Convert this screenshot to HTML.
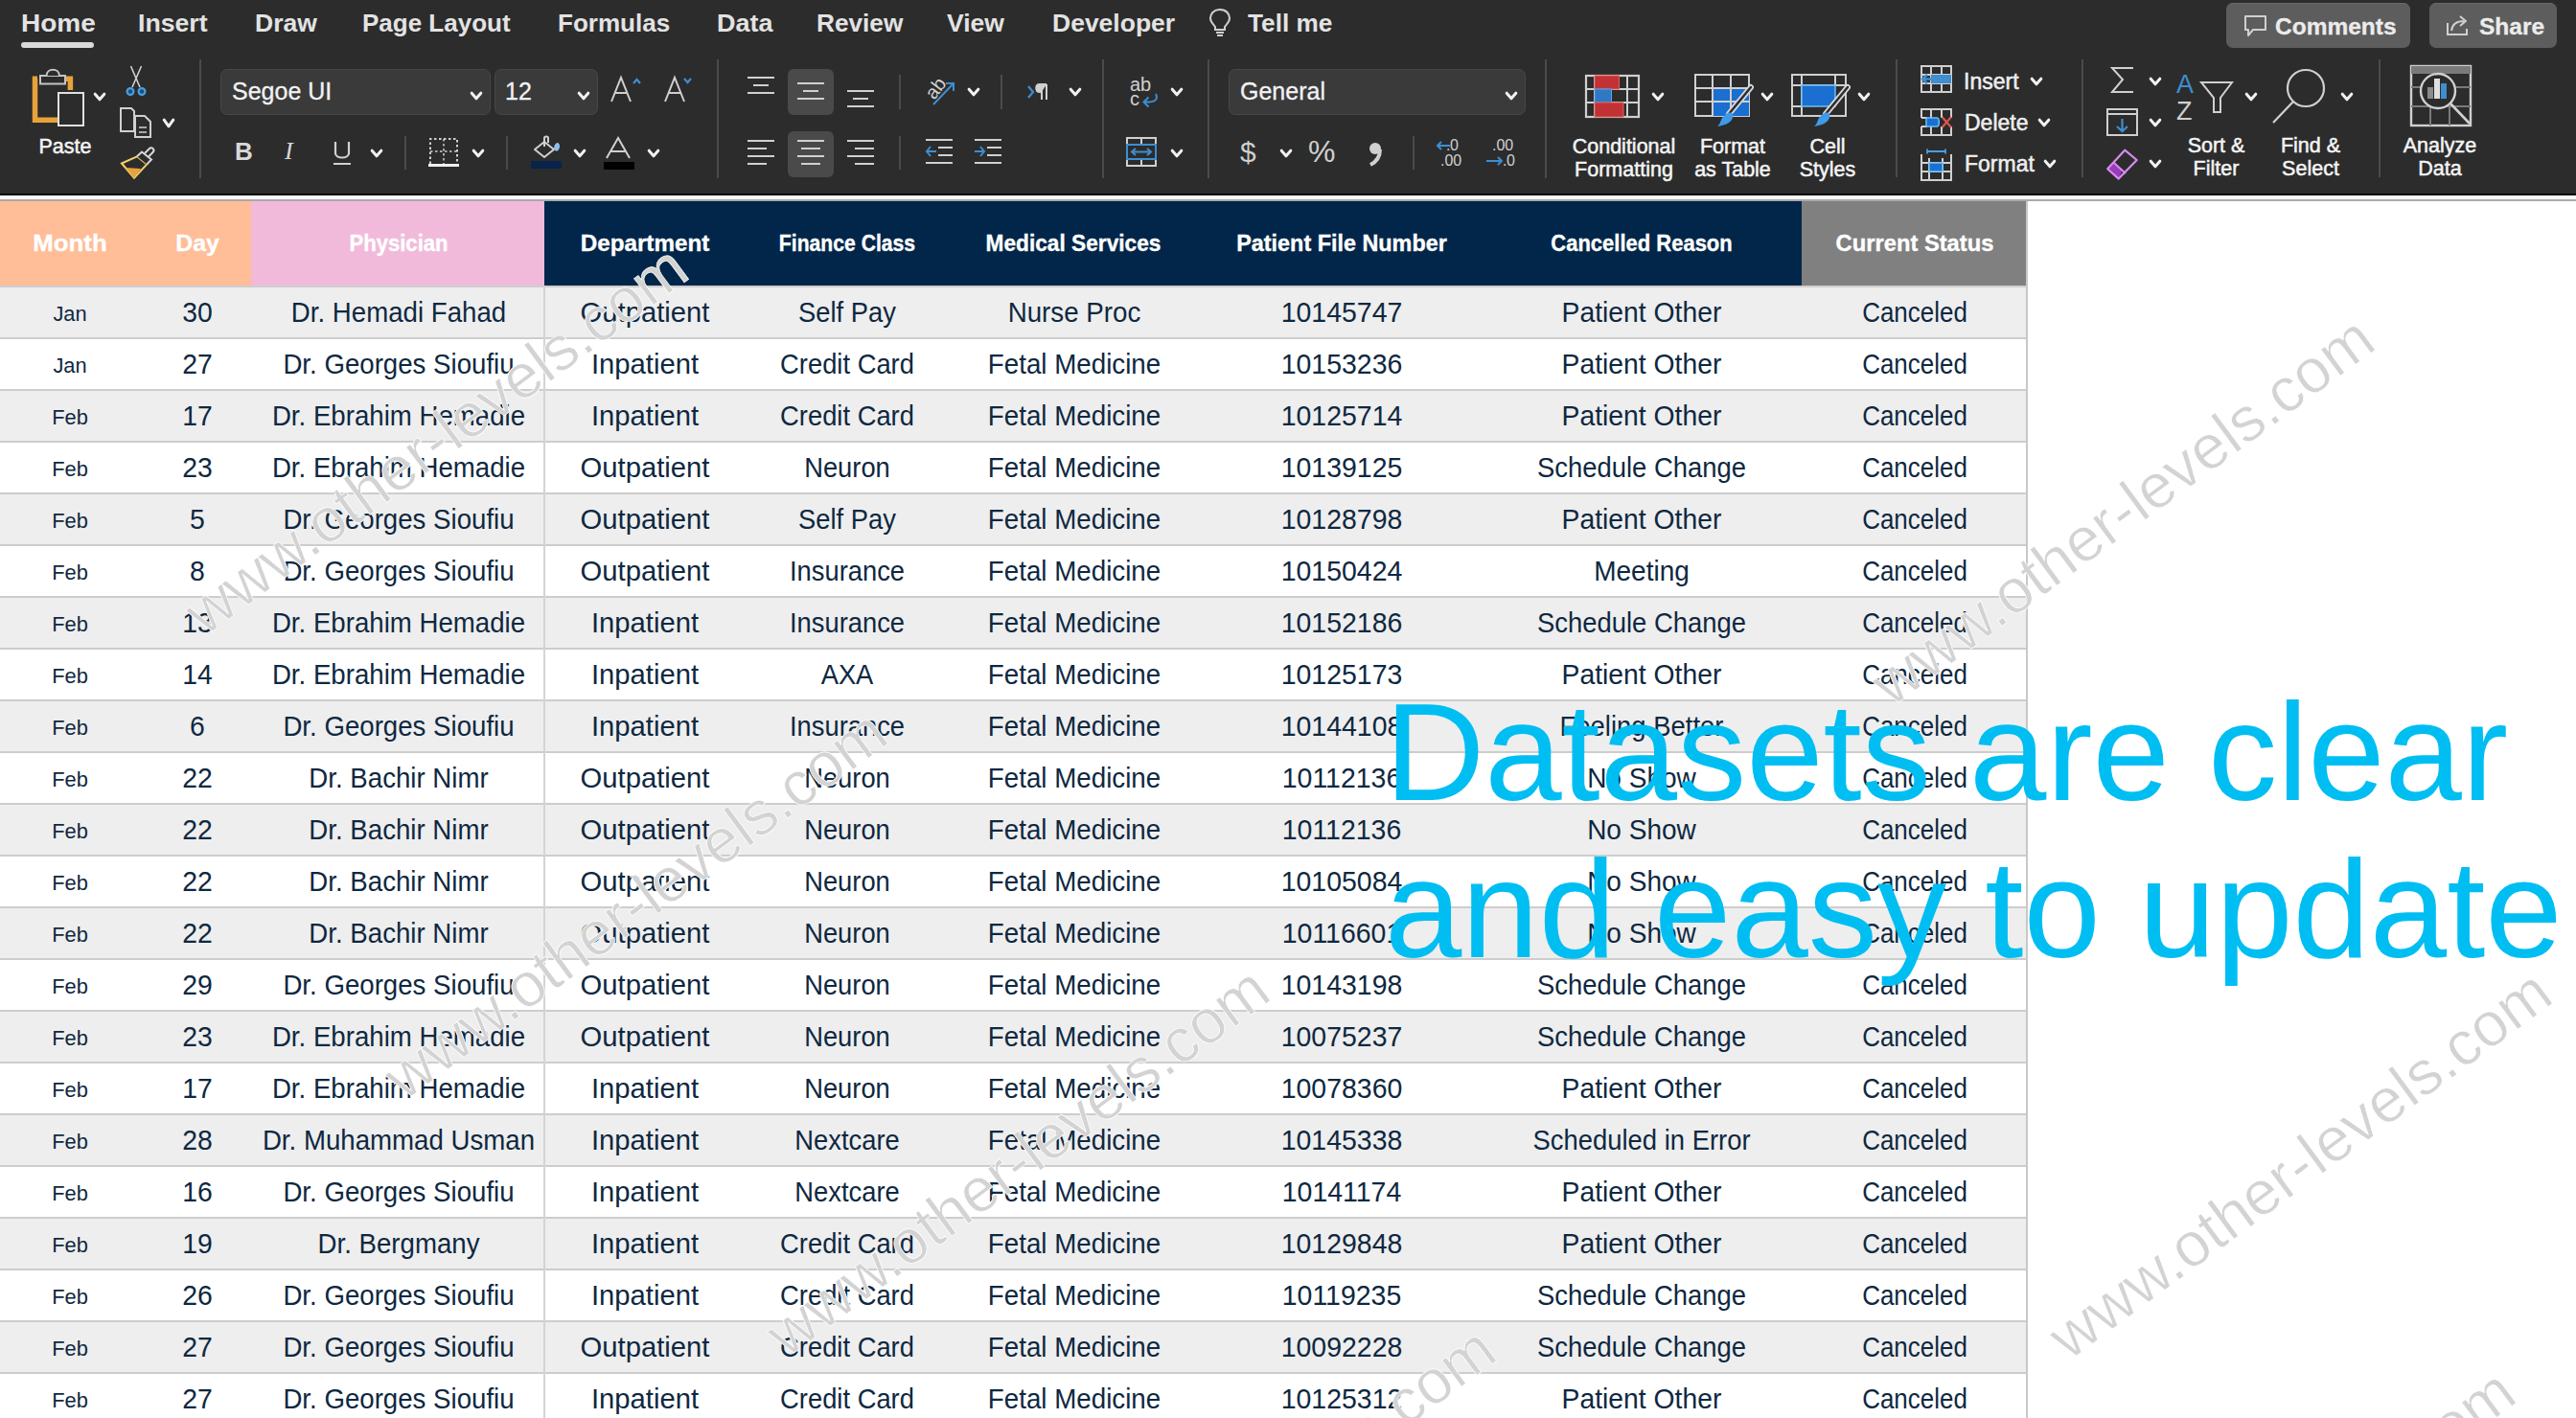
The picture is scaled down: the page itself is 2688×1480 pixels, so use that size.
<!DOCTYPE html><html><head><meta charset='utf-8'><style>
*{margin:0;padding:0;box-sizing:border-box}
html,body{width:2688px;height:1480px;overflow:hidden;background:#fff;font-family:"Liberation Sans", sans-serif}
.a{position:absolute}
.rib{position:absolute;left:0;top:0;width:2688px;height:202px;background:#2c2c2c}
.tab{position:absolute;top:9px;font-size:26.5px;font-weight:bold;color:#e3e3e3;white-space:nowrap;line-height:30px}
.lbl{position:absolute;font-size:21.5px;color:#f4f4f4;white-space:nowrap;text-align:center;line-height:24px;-webkit-text-stroke:0.5px #f4f4f4}
.sep{position:absolute;width:2px;background:#4b4b4b}
.cell{position:absolute;white-space:nowrap;text-align:center;color:#0e2841}
.hd{position:absolute;white-space:nowrap;text-align:center;color:#fff;font-weight:bold;-webkit-text-stroke:0.35px #fff}
.wm{position:absolute;white-space:nowrap;font-size:65px;color:#d3d3d3;line-height:1;-webkit-text-stroke:0.7px #fff}
svg{position:absolute;overflow:visible}
</style></head><body>
<div class='rib'></div>
<div class='a' style='left:0;top:202px;width:2688px;height:2px;background:#000'></div>
<div class='a' style='left:0;top:204px;width:2688px;height:4px;background:#f6f6f6'></div>
<div class='a' style='left:0;top:208px;width:2688px;height:2px;background:#a9a9a9'></div>
<div class='tab' style='left:22px;transform:scaleX(1.057);transform-origin:0 0'>Home</div>
<div class='tab' style='left:143.6px;transform:scaleX(1.006);transform-origin:0 0'>Insert</div>
<div class='tab' style='left:266px;transform:scaleX(1.000);transform-origin:0 0'>Draw</div>
<div class='tab' style='left:378px;transform:scaleX(0.981);transform-origin:0 0'>Page Layout</div>
<div class='tab' style='left:582px;transform:scaleX(0.983);transform-origin:0 0'>Formulas</div>
<div class='tab' style='left:747.5px;transform:scaleX(1.018);transform-origin:0 0'>Data</div>
<div class='tab' style='left:852px;transform:scaleX(0.989);transform-origin:0 0'>Review</div>
<div class='tab' style='left:988px;transform:scaleX(1.000);transform-origin:0 0'>View</div>
<div class='tab' style='left:1098px;transform:scaleX(1.000);transform-origin:0 0'>Developer</div>
<div class='tab' style='left:1302px;transform:scaleX(0.989);transform-origin:0 0'>Tell me</div>
<div class='a' style='left:22px;top:44px;width:76px;height:6px;border-radius:3px;background:#d9d9d9'></div>
<svg style='left:1261px;top:8px' width='24' height='30' viewBox='0 0 24 30'><path d='M12 2 C5 2 2 7 2 11 C2 15 5 17 7 20 L7 23 L17 23 L17 20 C19 17 22 15 22 11 C22 7 19 2 12 2 Z' fill='none' stroke='#d0d0d0' stroke-width='2'/><path d='M8 26 L16 26 M9 29 L15 29' stroke='#d0d0d0' stroke-width='2'/></svg>
<div class='a' style='left:2323px;top:3px;width:192px;height:47px;border-radius:7px;background:#5d5d5d;border-top:1px solid #6a6a6a'></div>
<div class='a' style='left:2535px;top:3px;width:133px;height:47px;border-radius:7px;background:#5d5d5d;border-top:1px solid #6a6a6a'></div>
<svg style='left:2341px;top:15px' width='25' height='25' viewBox='0 0 25 25'><path d='M2 2 H23 V16 H10 L5 22 L5 16 H2 Z' fill='none' stroke='#d0d0d0' stroke-width='2' stroke-linejoin='round'/></svg>
<div class='a' style='left:2374px;top:13px;font-size:24.5px;font-weight:bold;color:#ececec;line-height:30px;-webkit-text-stroke:0.3px #ececec'>Comments</div>
<svg style='left:2552px;top:14px' width='25' height='24' viewBox='0 0 25 24'><path d='M2 10 V22 H22 V16' fill='none' stroke='#d0d0d0' stroke-width='2'/><path d='M6 18 C7 11 12 8 19 8 M15 3 L21 8 L15 13' fill='none' stroke='#d0d0d0' stroke-width='2' stroke-linejoin='round'/></svg>
<div class='a' style='left:2587px;top:13px;font-size:24.5px;font-weight:bold;color:#ececec;line-height:30px;-webkit-text-stroke:0.3px #ececec'>Share</div>
<svg style='left:30px;top:68px' width='62' height='68' viewBox='0 0 62 68'><path d='M9 14.25 H6.5 V57.25 H32' fill='none' stroke='#e8a23a' stroke-width='5.5'/><path d='M37 14.25 H43.4 V26' fill='none' stroke='#e8a23a' stroke-width='5.5'/><path d='M12 19.6 V11 H38 V19.6 Z' fill='#2c2c2c' stroke='#c4c4c4' stroke-width='2'/><path d='M18.6 11 C18.6 2.5 31.9 2.5 31.9 11' fill='#2c2c2c' stroke='#c4c4c4' stroke-width='2'/><rect x='31' y='29' width='26' height='34' fill='#2c2c2c' stroke='#e0e0e0' stroke-width='2'/></svg>
<svg style='left:98px;top:96.5px' width='12' height='8' viewBox='0 0 12 8'><path d='M1.2 1.2 L6.0 6.8 L10.8 1.2' fill='none' stroke='#f2f2f2' stroke-width='3' stroke-linecap='round' stroke-linejoin='round'/></svg>
<div class='lbl' style='left:-32px;top:141px;width:200px;font-size:21.5px'>Paste</div>
<svg style='left:131px;top:68px' width='22' height='33' viewBox='0 0 22 33'><path d='M5.5 1 L15 23 M16.5 1 L7 23' stroke='#d0d0d0' stroke-width='1.6'/><circle cx='5' cy='27.5' r='3.4' fill='#1c4e7c' stroke='#4a9ee0' stroke-width='2.2'/><circle cx='17' cy='27.5' r='3.4' fill='#1c4e7c' stroke='#4a9ee0' stroke-width='2.2'/></svg>
<svg style='left:125px;top:112px' width='34' height='33' viewBox='0 0 34 33'><path d='M1 1 H12 L15 4 V25 H1 Z' fill='#2c2c2c' stroke='#d0d0d0' stroke-width='2'/><path d='M16 9 H26 L32 15 V31 H16 Z' fill='#2c2c2c' stroke='#d0d0d0' stroke-width='2'/><path d='M20 21 H28 M20 26 H28' stroke='#d0d0d0' stroke-width='1.5'/></svg>
<svg style='left:170px;top:124px' width='12' height='9' viewBox='0 0 12 9'><path d='M1.2 1.2 L6.0 7.8 L10.8 1.2' fill='none' stroke='#f2f2f2' stroke-width='3' stroke-linecap='round' stroke-linejoin='round'/></svg>
<svg style='left:120px;top:150px' width='42' height='42' viewBox='0 0 42 42'><path d='M7 20.5 L23 13.3 L33.3 21.4 L20 35.7 Z' fill='#2c2c2c' stroke='#f0cf6a' stroke-width='2'/><path d='M11 25 L27 26 L20 35.7 Z' fill='#e8a23a'/><path d='M23 13.3 L28 8.5 L38 16.5 L33.3 21.4' fill='#2c2c2c' stroke='#d8d8d8' stroke-width='2'/><path d='M31 10 L36 5 C37 4 39 4 40 5.5 C41 7 40.5 8 39.5 9 L35 13.5' fill='none' stroke='#d8d8d8' stroke-width='2'/></svg>
<div class='sep' style='left:208px;top:62px;height:124px'></div>
<div class='a' style='left:229.5px;top:72px;width:282px;height:48px;border-radius:7px;background:#3a3a3a;border:1.5px solid #474747'></div>
<div class='a' style='left:242px;top:80px;font-size:25px;color:#f2f2f2;line-height:30px;-webkit-text-stroke:0.3px #f2f2f2'>Segoe UI</div>
<svg style='left:490.5px;top:96px' width='12' height='8' viewBox='0 0 12 8'><path d='M1.2 1.2 L6.0 6.8 L10.8 1.2' fill='none' stroke='#f2f2f2' stroke-width='3' stroke-linecap='round' stroke-linejoin='round'/></svg>
<div class='a' style='left:516px;top:72px;width:108px;height:48px;border-radius:7px;background:#3a3a3a;border:1.5px solid #474747'></div>
<div class='a' style='left:527px;top:80px;font-size:25px;color:#f2f2f2;line-height:30px;-webkit-text-stroke:0.3px #f2f2f2'>12</div>
<svg style='left:602.7px;top:96px' width='12' height='8' viewBox='0 0 12 8'><path d='M1.2 1.2 L6.0 6.8 L10.8 1.2' fill='none' stroke='#f2f2f2' stroke-width='3' stroke-linecap='round' stroke-linejoin='round'/></svg>
<svg style='left:636px;top:78px' width='34' height='30' viewBox='0 0 34 30'><path d='M2 28 L12 3 L22 28 M6 19 H18' fill='none' stroke='#d0d0d0' stroke-width='2'/><path d='M25 9 L28.5 5 L32 9' fill='none' stroke='#3e8ed0' stroke-width='2.2'/></svg>
<svg style='left:692px;top:78px' width='32' height='30' viewBox='0 0 32 30'><path d='M2 28 L12 3 L22 28 M6 19 H18' fill='none' stroke='#d0d0d0' stroke-width='2'/><path d='M22 4 L25.5 8 L29 4' fill='none' stroke='#3e8ed0' stroke-width='2.2'/></svg>
<div class='a' style='left:245px;top:143px;font-size:26px;font-weight:bold;color:#d8d8d8;line-height:30px'>B</div>
<div class='a' style='left:297px;top:143px;font-size:26px;font-style:italic;color:#d8d8d8;line-height:30px;font-family:"Liberation Serif"'>I</div>
<svg style='left:347px;top:146px' width='20' height='28' viewBox='0 0 20 28'><path d='M3 2 V14 C3 20 17 20 17 14 V2' fill='none' stroke='#d0d0d0' stroke-width='2.2'/><path d='M1 25 H19' stroke='#d0d0d0' stroke-width='2'/></svg>
<svg style='left:387px;top:156px' width='12' height='8' viewBox='0 0 12 8'><path d='M1.2 1.2 L6.0 6.8 L10.8 1.2' fill='none' stroke='#f2f2f2' stroke-width='3' stroke-linecap='round' stroke-linejoin='round'/></svg>
<div class='sep' style='left:422px;top:142px;height:35px'></div>
<svg style='left:447px;top:143px' width='32' height='32' viewBox='0 0 32 32'><path d='M2 28 V2 H30 V28' fill='none' stroke='#d0d0d0' stroke-width='2' stroke-dasharray='2.5 2.5'/><path d='M16 2 V28 M2 15 H30' stroke='#d0d0d0' stroke-width='1.5' stroke-dasharray='2.5 2.5'/><path d='M0 29.5 H32' stroke='#f0f0f0' stroke-width='3'/></svg>
<svg style='left:493px;top:156px' width='12' height='8' viewBox='0 0 12 8'><path d='M1.2 1.2 L6.0 6.8 L10.8 1.2' fill='none' stroke='#f2f2f2' stroke-width='3' stroke-linecap='round' stroke-linejoin='round'/></svg>
<div class='sep' style='left:528px;top:142px;height:35px'></div>
<svg style='left:553px;top:141px' width='34' height='36' viewBox='0 0 34 36'><path d='M5 15 L15 7 L25 15 L15 23 Z' fill='none' stroke='#d0d0d0' stroke-width='2' stroke-linejoin='round'/><path d='M15 12 V3 C15 1 19 1 19 3 V8' fill='none' stroke='#d0d0d0' stroke-width='2'/><path d='M25 15 C25 10 27 8 29 8 C31 9 32 12 30 15 C29 17 27 17 25 15 Z' fill='#8ec0ea'/><rect x='1' y='27' width='32' height='8' fill='#08244a'/></svg>
<svg style='left:599px;top:156px' width='12' height='8' viewBox='0 0 12 8'><path d='M1.2 1.2 L6.0 6.8 L10.8 1.2' fill='none' stroke='#f2f2f2' stroke-width='3' stroke-linecap='round' stroke-linejoin='round'/></svg>
<svg style='left:629px;top:143px' width='34' height='34' viewBox='0 0 34 34'><path d='M4 22 L16 1 L28 22 M8 15 H24' fill='none' stroke='#d0d0d0' stroke-width='2'/><rect x='1' y='26' width='32' height='8' fill='#000'/></svg>
<svg style='left:676px;top:156px' width='12' height='8' viewBox='0 0 12 8'><path d='M1.2 1.2 L6.0 6.8 L10.8 1.2' fill='none' stroke='#f2f2f2' stroke-width='3' stroke-linecap='round' stroke-linejoin='round'/></svg>
<div class='sep' style='left:748px;top:62px;height:124px'></div>
<div class='a' style='left:822px;top:72px;width:48px;height:48px;border-radius:6px;background:#4a4a4a'></div>
<div class='a' style='left:822px;top:136.5px;width:48px;height:48px;border-radius:6px;background:#4a4a4a'></div>
<svg style='left:780px;top:79px' width='28' height='30' viewBox='0 0 28 30'><path d='M0 2 H28' stroke='#d0d0d0' stroke-width='2'/><path d='M6 10 H22' stroke='#d0d0d0' stroke-width='2'/><path d='M0 18 H28' stroke='#d0d0d0' stroke-width='2'/></svg>
<svg style='left:832px;top:85px' width='28' height='30' viewBox='0 0 28 30'><path d='M0 2 H28' stroke='#d0d0d0' stroke-width='2'/><path d='M6 10 H22' stroke='#d0d0d0' stroke-width='2'/><path d='M0 18 H28' stroke='#d0d0d0' stroke-width='2'/></svg>
<svg style='left:884px;top:93px' width='28' height='30' viewBox='0 0 28 30'><path d='M0 2 H28' stroke='#d0d0d0' stroke-width='2'/><path d='M6 10 H22' stroke='#d0d0d0' stroke-width='2'/><path d='M0 18 H28' stroke='#d0d0d0' stroke-width='2'/></svg>
<svg style='left:780px;top:146px' width='28' height='30' viewBox='0 0 28 30'><path d='M0 1 H28' stroke='#d0d0d0' stroke-width='2'/><path d='M0 9 H20' stroke='#d0d0d0' stroke-width='2'/><path d='M0 17 H28' stroke='#d0d0d0' stroke-width='2'/><path d='M0 25 H20' stroke='#d0d0d0' stroke-width='2'/></svg>
<svg style='left:832px;top:146px' width='28' height='30' viewBox='0 0 28 30'><path d='M0 1 H28' stroke='#d0d0d0' stroke-width='2'/><path d='M4 9 H24' stroke='#d0d0d0' stroke-width='2'/><path d='M0 17 H28' stroke='#d0d0d0' stroke-width='2'/><path d='M4 25 H24' stroke='#d0d0d0' stroke-width='2'/></svg>
<svg style='left:884px;top:146px' width='28' height='30' viewBox='0 0 28 30'><path d='M0 1 H28' stroke='#d0d0d0' stroke-width='2'/><path d='M8 9 H28' stroke='#d0d0d0' stroke-width='2'/><path d='M0 17 H28' stroke='#d0d0d0' stroke-width='2'/><path d='M8 25 H28' stroke='#d0d0d0' stroke-width='2'/></svg>
<div class='sep' style='left:938px;top:78px;height:36px'></div>
<div class='sep' style='left:938px;top:142px;height:35px'></div>
<svg style='left:962px;top:79px' width='36' height='32' viewBox='0 0 36 32'><text x='3' y='22' font-size='20' fill='#d0d0d0' transform='rotate(-52 12 14)' font-family='Liberation Sans'>ab</text><path d='M12 30 L33 8 M25 8 H33 V16' fill='none' stroke='#3e8ed0' stroke-width='2'/></svg>
<svg style='left:1009.6px;top:92px' width='12' height='8' viewBox='0 0 12 8'><path d='M1.2 1.2 L6.0 6.8 L10.8 1.2' fill='none' stroke='#f2f2f2' stroke-width='3' stroke-linecap='round' stroke-linejoin='round'/></svg>
<div class='sep' style='left:1044px;top:78px;height:36px'></div>
<svg style='left:1072px;top:86px' width='28' height='20' viewBox='0 0 28 20'><path d='M1 4 L6 10 L1 16' fill='none' stroke='#3e8ed0' stroke-width='2.2'/><path d='M15 18 V2 M20 18 V2 M20 2 H13 C8 2 8 10 13 10 H15' fill='#d0d0d0' stroke='#d0d0d0' stroke-width='2'/></svg>
<svg style='left:1115.6px;top:92px' width='12' height='8' viewBox='0 0 12 8'><path d='M1.2 1.2 L6.0 6.8 L10.8 1.2' fill='none' stroke='#f2f2f2' stroke-width='3' stroke-linecap='round' stroke-linejoin='round'/></svg>
<svg style='left:966px;top:145px' width='30' height='28' viewBox='0 0 30 28'><path d='M0 1 H28 M13 9 H28 M13 17 H28 M0 25 H28' stroke='#d0d0d0' stroke-width='2'/><path d='M1 13 H11 M5 8 L1 13 L5 18' fill='none' stroke='#3e8ed0' stroke-width='2'/></svg>
<svg style='left:1017px;top:145px' width='30' height='28' viewBox='0 0 30 28'><path d='M0 1 H28 M13 9 H28 M13 17 H28 M0 25 H28' stroke='#d0d0d0' stroke-width='2'/><path d='M0 13 H10 M6 8 L10 13 L6 18' fill='none' stroke='#3e8ed0' stroke-width='2'/></svg>
<div class='sep' style='left:1150px;top:62px;height:124px'></div>
<svg style='left:1179px;top:79px' width='34' height='34' viewBox='0 0 34 34'><text x='0' y='16' font-size='20' fill='#d0d0d0' font-family='Liberation Sans'>ab</text><text x='0' y='31' font-size='20' fill='#d0d0d0' font-family='Liberation Sans'>c</text><path d='M27 19 C30 25 26 28 15 27.5 M19.5 22.5 L14.5 27.5 L19.5 32.5' fill='none' stroke='#3e8ed0' stroke-width='2'/></svg>
<svg style='left:1221.6px;top:92px' width='12' height='8' viewBox='0 0 12 8'><path d='M1.2 1.2 L6.0 6.8 L10.8 1.2' fill='none' stroke='#f2f2f2' stroke-width='3' stroke-linecap='round' stroke-linejoin='round'/></svg>
<svg style='left:1175px;top:143px' width='33' height='32' viewBox='0 0 33 32'><rect x='1' y='1' width='30' height='29' fill='none' stroke='#d0d0d0' stroke-width='2'/><path d='M1 8 H31 M1 23 H31 M16 1 V8 M16 23 V30' stroke='#d0d0d0' stroke-width='2'/><rect x='1' y='8' width='30' height='15' fill='none' stroke='#3e8ed0' stroke-width='2'/><path d='M6 15.5 H26 M10 12 L6 15.5 L10 19 M22 12 L26 15.5 L22 19' fill='none' stroke='#3e8ed0' stroke-width='2'/></svg>
<svg style='left:1221.6px;top:156px' width='12' height='8' viewBox='0 0 12 8'><path d='M1.2 1.2 L6.0 6.8 L10.8 1.2' fill='none' stroke='#f2f2f2' stroke-width='3' stroke-linecap='round' stroke-linejoin='round'/></svg>
<div class='sep' style='left:1260px;top:62px;height:124px'></div>
<div class='a' style='left:1282px;top:72px;width:310px;height:48px;border-radius:7px;background:#3a3a3a;border:1.5px solid #474747'></div>
<div class='a' style='left:1294px;top:80px;font-size:25px;color:#f2f2f2;line-height:30px;-webkit-text-stroke:0.3px #f2f2f2'>General</div>
<svg style='left:1570.6px;top:96px' width='12' height='8' viewBox='0 0 12 8'><path d='M1.2 1.2 L6.0 6.8 L10.8 1.2' fill='none' stroke='#f2f2f2' stroke-width='3' stroke-linecap='round' stroke-linejoin='round'/></svg>
<div class='a' style='left:1294px;top:142px;font-size:30px;color:#d0d0d0;line-height:34px'>$</div>
<svg style='left:1335.5px;top:156px' width='12' height='8' viewBox='0 0 12 8'><path d='M1.2 1.2 L6.0 6.8 L10.8 1.2' fill='none' stroke='#f2f2f2' stroke-width='3' stroke-linecap='round' stroke-linejoin='round'/></svg>
<div class='a' style='left:1365px;top:141px;font-size:32px;color:#d0d0d0;line-height:34px'>%</div>
<svg style='left:1427px;top:146px' width='16' height='28' viewBox='0 0 16 28'><circle cx='8' cy='9' r='6' fill='#d0d0d0'/><path d='M13 10 C13 18 9 23 3 26' fill='none' stroke='#d0d0d0' stroke-width='4'/></svg>
<div class='sep' style='left:1474px;top:142px;height:35px'></div>
<svg style='left:1498px;top:143px' width='34' height='32' viewBox='0 0 34 32'><text x='15' y='14' font-size='16' fill='#d0d0d0' font-family='Liberation Sans'>0</text><text x='5' y='30' font-size='16' fill='#d0d0d0' font-family='Liberation Sans'>.00</text><text x='11' y='14' font-size='16' fill='#d0d0d0' font-family='Liberation Sans'>.</text><path d='M2 9 H15 M6 5 L2 9 L6 13' fill='none' stroke='#3e8ed0' stroke-width='2'/></svg>
<svg style='left:1550px;top:143px' width='34' height='32' viewBox='0 0 34 32'><text x='7' y='14' font-size='16' fill='#d0d0d0' font-family='Liberation Sans'>.00</text><text x='22' y='30' font-size='16' fill='#d0d0d0' font-family='Liberation Sans'>0</text><text x='18' y='30' font-size='16' fill='#d0d0d0' font-family='Liberation Sans'>.</text><path d='M1 25 H17 M13 21 L17 25 L13 29' fill='none' stroke='#3e8ed0' stroke-width='2'/></svg>
<div class='sep' style='left:1612px;top:62px;height:124px'></div>
<svg style='left:1653px;top:77px' width='58' height='46' viewBox='0 0 58 46'><rect x='2' y='2' width='55' height='43' fill='none' stroke='#d0d0d0' stroke-width='2.2'/><path d='M11 2 V45 M45 2 V45 M2 16 H57 M2 30 H57' stroke='#d0d0d0' stroke-width='2'/><rect x='11' y='2' width='25.5' height='14' fill='#c23234' stroke='#e06060' stroke-width='1'/><rect x='11' y='16' width='17.5' height='14' fill='#2f78c4' stroke='#5aa8e8' stroke-width='1'/><rect x='11' y='30' width='30' height='15' fill='#c23234' stroke='#e06060' stroke-width='1'/></svg>
<svg style='left:1724px;top:97px' width='12' height='8' viewBox='0 0 12 8'><path d='M1.2 1.2 L6.0 6.8 L10.8 1.2' fill='none' stroke='#f2f2f2' stroke-width='3' stroke-linecap='round' stroke-linejoin='round'/></svg>
<div class='lbl' style='left:1594.5px;top:140.5px;width:200px;font-size:21.5px'>Conditional</div>
<div class='lbl' style='left:1594.5px;top:164.5px;width:200px;font-size:21.5px'>Formatting</div>
<svg style='left:1768px;top:77px' width='62' height='56' viewBox='0 0 62 56'><rect x='1' y='1' width='56' height='43' fill='none' stroke='#d0d0d0' stroke-width='2'/><rect x='19' y='15' width='38' height='29' fill='#1a6fd0'/><path d='M19 1 V44 M38 1 V44 M1 15 H57 M1 29 H57' stroke='#d0d0d0' stroke-width='2'/><path d='M59 14 L36 42' stroke='#d8d8d8' stroke-width='6' stroke-linecap='round'/><path d='M59 14 L36 42' stroke='#2c2c2c' stroke-width='2.5' stroke-linecap='round'/><path d='M31 44 C36 38 42 40 40 46 C38 52 30 54 24 55 C28 52 27 47 31 44 Z' fill='#3f9ae8'/></svg>
<svg style='left:1838px;top:97px' width='12' height='8' viewBox='0 0 12 8'><path d='M1.2 1.2 L6.0 6.8 L10.8 1.2' fill='none' stroke='#f2f2f2' stroke-width='3' stroke-linecap='round' stroke-linejoin='round'/></svg>
<div class='lbl' style='left:1708px;top:140.5px;width:200px;font-size:21.5px'>Format</div>
<div class='lbl' style='left:1708px;top:164.5px;width:200px;font-size:21.5px'>as Table</div>
<svg style='left:1869px;top:77px' width='62' height='56' viewBox='0 0 62 56'><rect x='1' y='1' width='56' height='43' fill='none' stroke='#d0d0d0' stroke-width='2'/><path d='M11 1 V44 M46 1 V12 M1 12 H57 M1 34 H11' stroke='#d0d0d0' stroke-width='2'/><rect x='11' y='12' width='35' height='22' fill='#1a6fd0' stroke='#6cc0f8' stroke-width='1.5'/><path d='M59 14 L36 42' stroke='#d8d8d8' stroke-width='6' stroke-linecap='round'/><path d='M59 14 L36 42' stroke='#2c2c2c' stroke-width='2.5' stroke-linecap='round'/><path d='M31 44 C36 38 42 40 40 46 C38 52 30 54 24 55 C28 52 27 47 31 44 Z' fill='#3f9ae8'/></svg>
<svg style='left:1938.5px;top:97px' width='12' height='8' viewBox='0 0 12 8'><path d='M1.2 1.2 L6.0 6.8 L10.8 1.2' fill='none' stroke='#f2f2f2' stroke-width='3' stroke-linecap='round' stroke-linejoin='round'/></svg>
<div class='lbl' style='left:1807px;top:140.5px;width:200px;font-size:21.5px'>Cell</div>
<div class='lbl' style='left:1807px;top:164.5px;width:200px;font-size:21.5px'>Styles</div>
<div class='sep' style='left:1978px;top:62px;height:123px'></div>
<svg style='left:2004px;top:68px' width='34' height='30' viewBox='0 0 34 30'><rect x='1' y='1' width='31' height='27' fill='none' stroke='#d0d0d0' stroke-width='2'/><path d='M11 1 V28 M22 1 V28 M1 10 H32 M1 19 H32' stroke='#d0d0d0' stroke-width='2'/><rect x='11' y='10' width='21' height='9' fill='#3e8ed0'/><path d='M2 14.5 H14 M7 10 L2 14.5 L7 19' fill='none' stroke='#3e8ed0' stroke-width='2.4'/></svg>
<div class='a' style='left:2049px;top:72px;font-size:23px;color:#ececec;line-height:26px;-webkit-text-stroke:0.5px #f4f4f4'>Insert</div>
<svg style='left:2119px;top:81px' width='12' height='8' viewBox='0 0 12 8'><path d='M1.2 1.2 L6.0 6.8 L10.8 1.2' fill='none' stroke='#f2f2f2' stroke-width='3' stroke-linecap='round' stroke-linejoin='round'/></svg>
<svg style='left:2004px;top:113px' width='34' height='30' viewBox='0 0 34 30'><path d='M1 10 V1 H32 V10 M1 19 V28 H32 V19 M11 1 V10 M22 1 V10 M11 19 V28 M22 19 V28 M1 10 H7 M1 19 H7' fill='none' stroke='#d0d0d0' stroke-width='2'/><path d='M6 10 H17 C20 10 20 19 17 19 H6 Z' fill='#1a6fd0' stroke='#6cc0f8' stroke-width='1.5'/><path d='M22.5 9 L32 20 M32 9 L22.5 20' stroke='#e05555' stroke-width='2.2'/></svg>
<div class='a' style='left:2050px;top:115px;font-size:23px;color:#ececec;line-height:26px;-webkit-text-stroke:0.5px #f4f4f4'>Delete</div>
<svg style='left:2127px;top:124px' width='12' height='8' viewBox='0 0 12 8'><path d='M1.2 1.2 L6.0 6.8 L10.8 1.2' fill='none' stroke='#f2f2f2' stroke-width='3' stroke-linecap='round' stroke-linejoin='round'/></svg>
<svg style='left:2004px;top:155px' width='34' height='34' viewBox='0 0 34 34'><path d='M1 6 V33 H32 V6' fill='none' stroke='#d0d0d0' stroke-width='2'/><path d='M9 10 V33 M23 10 V33 M1 15 H32 M1 24 H32' stroke='#d0d0d0' stroke-width='2'/><rect x='9' y='15' width='14' height='9' fill='#1a6fd0' stroke='#6cc0f8' stroke-width='1.5'/><path d='M7 3 H26 M7 0.5 V5.5 M26 0.5 V5.5' stroke='#4a9ee0' stroke-width='1.8'/></svg>
<div class='a' style='left:2050px;top:158px;font-size:23px;color:#ececec;line-height:26px;-webkit-text-stroke:0.5px #f4f4f4'>Format</div>
<svg style='left:2133px;top:167px' width='12' height='8' viewBox='0 0 12 8'><path d='M1.2 1.2 L6.0 6.8 L10.8 1.2' fill='none' stroke='#f2f2f2' stroke-width='3' stroke-linecap='round' stroke-linejoin='round'/></svg>
<div class='sep' style='left:2171.5px;top:62px;height:123px'></div>
<svg style='left:2202px;top:69px' width='26' height='30' viewBox='0 0 26 30'><path d='M24 2 H2 L13 14 L2 27 H24' fill='none' stroke='#d0d0d0' stroke-width='2'/></svg>
<svg style='left:2242.6px;top:81px' width='12' height='8' viewBox='0 0 12 8'><path d='M1.2 1.2 L6.0 6.8 L10.8 1.2' fill='none' stroke='#f2f2f2' stroke-width='3' stroke-linecap='round' stroke-linejoin='round'/></svg>
<svg style='left:2198px;top:113px' width='34' height='30' viewBox='0 0 34 30'><rect x='1' y='1' width='31' height='27' fill='none' stroke='#d0d0d0' stroke-width='2'/><path d='M1 6 H32' stroke='#d0d0d0' stroke-width='2'/><path d='M16.5 11 V24 M11 19 L16.5 24 L22 19' fill='none' stroke='#3e8ed0' stroke-width='2.2'/></svg>
<svg style='left:2242.6px;top:124px' width='12' height='8' viewBox='0 0 12 8'><path d='M1.2 1.2 L6.0 6.8 L10.8 1.2' fill='none' stroke='#f2f2f2' stroke-width='3' stroke-linecap='round' stroke-linejoin='round'/></svg>
<svg style='left:2198px;top:155px' width='34' height='34' viewBox='0 0 34 34'><path d='M1.2 21.3 L8 15 L16.5 22.5 L12.7 31.6 Z' fill='#9a3cb8'/><path d='M1.2 21.3 L19.2 1.7 L31.7 12 L12.7 31.6 Z' fill='none' stroke='#d68cf0' stroke-width='2.2' stroke-linejoin='round'/><path d='M8 15 L20 26' stroke='#d68cf0' stroke-width='2'/></svg>
<svg style='left:2242.6px;top:167px' width='12' height='8' viewBox='0 0 12 8'><path d='M1.2 1.2 L6.0 6.8 L10.8 1.2' fill='none' stroke='#f2f2f2' stroke-width='3' stroke-linecap='round' stroke-linejoin='round'/></svg>
<svg style='left:2271px;top:72px' width='60' height='56' viewBox='0 0 60 56'><text x='0' y='25' font-size='27' fill='#3e8ed0' font-family='Liberation Sans'>A</text><text x='0' y='53' font-size='27' fill='#d0d0d0' font-family='Liberation Sans'>Z</text><path d='M26 14 H58 L46 30 V45 H39 V30 Z' fill='none' stroke='#d0d0d0' stroke-width='2'/></svg>
<svg style='left:2343px;top:97px' width='12' height='8' viewBox='0 0 12 8'><path d='M1.2 1.2 L6.0 6.8 L10.8 1.2' fill='none' stroke='#f2f2f2' stroke-width='3' stroke-linecap='round' stroke-linejoin='round'/></svg>
<div class='lbl' style='left:2212.5px;top:140px;width:200px;font-size:21.5px'>Sort &amp;</div>
<div class='lbl' style='left:2212.5px;top:164px;width:200px;font-size:21.5px'>Filter</div>
<svg style='left:2370px;top:71px' width='62' height='62' viewBox='0 0 62 62'><circle cx='36' cy='21' r='19' fill='none' stroke='#d0d0d0' stroke-width='2.2'/><path d='M23 35 L2 57' stroke='#d0d0d0' stroke-width='2.2'/></svg>
<svg style='left:2442.8px;top:97px' width='12' height='8' viewBox='0 0 12 8'><path d='M1.2 1.2 L6.0 6.8 L10.8 1.2' fill='none' stroke='#f2f2f2' stroke-width='3' stroke-linecap='round' stroke-linejoin='round'/></svg>
<div class='lbl' style='left:2311px;top:140px;width:200px;font-size:21.5px'>Find &amp;</div>
<div class='lbl' style='left:2311px;top:164px;width:200px;font-size:21.5px'>Select</div>
<div class='sep' style='left:2482px;top:62px;height:123px'></div>
<svg style='left:2514px;top:67px' width='66' height='66' viewBox='0 0 66 66'><rect x='2' y='2' width='62' height='62' fill='none' stroke='#d0d0d0' stroke-width='2.4'/><rect x='2' y='2' width='62' height='8' fill='#7a7a7a'/><path d='M2 24 H64 M2 44 H64 M22 44 V64 M42 44 V64' stroke='#7a7a7a' stroke-width='2'/><circle cx='30' cy='28' r='18' fill='#2c2c2c' stroke='#d0d0d0' stroke-width='2.4'/><path d='M43 41 L63 62' stroke='#d0d0d0' stroke-width='2.6'/><rect x='19' y='24' width='6' height='12' fill='#8a8a8a'/><rect x='26' y='15' width='6' height='21' fill='#e0e0e0'/><rect x='33' y='20' width='6' height='16' fill='#3e8ed0'/></svg>
<div class='lbl' style='left:2446px;top:140px;width:200px;font-size:21.5px'>Analyze</div>
<div class='lbl' style='left:2446px;top:164px;width:200px;font-size:21.5px'>Data</div>
<div class='a' style='left:0;top:210px;width:262px;height:88px;background:#ffbd98'></div>
<div class='a' style='left:262px;top:210px;width:306px;height:88px;background:#f1badb'></div>
<div class='a' style='left:568px;top:210px;width:1312px;height:88px;background:#012649'></div>
<div class='a' style='left:1880px;top:210px;width:234px;height:88px;background:#808080'></div>
<div class='hd' style='left:-76.6px;top:239px;width:300px;font-size:23.5px;line-height:30px;transform:scaleX(1.1)'>Month</div>
<div class='hd' style='left:56px;top:239px;width:300px;font-size:23.5px;line-height:30px;transform:scaleX(1.06)'>Day</div>
<div class='hd' style='left:266.4px;top:239px;width:300px;font-size:23.5px;line-height:30px;transform:scaleX(0.94)'>Physician</div>
<div class='hd' style='left:522.7px;top:239px;width:300px;font-size:23.5px;line-height:30px;transform:scaleX(1.03)'>Department</div>
<div class='hd' style='left:734.2px;top:239px;width:300px;font-size:23.5px;line-height:30px;transform:scaleX(0.9)'>Finance Class</div>
<div class='hd' style='left:970.4000000000001px;top:239px;width:300px;font-size:23.5px;line-height:30px;transform:scaleX(0.965)'>Medical Services</div>
<div class='hd' style='left:1249.5px;top:239px;width:300px;font-size:23.5px;line-height:30px;transform:scaleX(0.995)'>Patient File Number</div>
<div class='hd' style='left:1562.9px;top:239px;width:300px;font-size:23.5px;line-height:30px;transform:scaleX(0.936)'>Cancelled Reason</div>
<div class='hd' style='left:1848.2px;top:239px;width:300px;font-size:23.5px;line-height:30px;transform:scaleX(1.01)'>Current Status</div>
<div class='a' style='left:0;top:298px;width:2114px;height:54px;background:#eeeeee;border-top:2px solid #cdcdcd'></div>
<div class='a' style='left:0;top:352px;width:2114px;height:54px;background:#ffffff;border-top:2px solid #cdcdcd'></div>
<div class='a' style='left:0;top:406px;width:2114px;height:54px;background:#eeeeee;border-top:2px solid #cdcdcd'></div>
<div class='a' style='left:0;top:460px;width:2114px;height:54px;background:#ffffff;border-top:2px solid #cdcdcd'></div>
<div class='a' style='left:0;top:514px;width:2114px;height:54px;background:#eeeeee;border-top:2px solid #cdcdcd'></div>
<div class='a' style='left:0;top:568px;width:2114px;height:54px;background:#ffffff;border-top:2px solid #cdcdcd'></div>
<div class='a' style='left:0;top:622px;width:2114px;height:54px;background:#eeeeee;border-top:2px solid #cdcdcd'></div>
<div class='a' style='left:0;top:676px;width:2114px;height:54px;background:#ffffff;border-top:2px solid #cdcdcd'></div>
<div class='a' style='left:0;top:730px;width:2114px;height:54px;background:#eeeeee;border-top:2px solid #cdcdcd'></div>
<div class='a' style='left:0;top:784px;width:2114px;height:54px;background:#ffffff;border-top:2px solid #cdcdcd'></div>
<div class='a' style='left:0;top:838px;width:2114px;height:54px;background:#eeeeee;border-top:2px solid #cdcdcd'></div>
<div class='a' style='left:0;top:892px;width:2114px;height:54px;background:#ffffff;border-top:2px solid #cdcdcd'></div>
<div class='a' style='left:0;top:946px;width:2114px;height:54px;background:#eeeeee;border-top:2px solid #cdcdcd'></div>
<div class='a' style='left:0;top:1000px;width:2114px;height:54px;background:#ffffff;border-top:2px solid #cdcdcd'></div>
<div class='a' style='left:0;top:1054px;width:2114px;height:54px;background:#eeeeee;border-top:2px solid #cdcdcd'></div>
<div class='a' style='left:0;top:1108px;width:2114px;height:54px;background:#ffffff;border-top:2px solid #cdcdcd'></div>
<div class='a' style='left:0;top:1162px;width:2114px;height:54px;background:#eeeeee;border-top:2px solid #cdcdcd'></div>
<div class='a' style='left:0;top:1216px;width:2114px;height:54px;background:#ffffff;border-top:2px solid #cdcdcd'></div>
<div class='a' style='left:0;top:1270px;width:2114px;height:54px;background:#eeeeee;border-top:2px solid #cdcdcd'></div>
<div class='a' style='left:0;top:1324px;width:2114px;height:54px;background:#ffffff;border-top:2px solid #cdcdcd'></div>
<div class='a' style='left:0;top:1378px;width:2114px;height:54px;background:#eeeeee;border-top:2px solid #cdcdcd'></div>
<div class='a' style='left:0;top:1432px;width:2114px;height:54px;background:#ffffff;border-top:2px solid #cdcdcd'></div>
<div class='a' style='left:567px;top:298px;width:2px;height:1182px;background:#d4d4d4'></div>
<div class='a' style='left:2114px;top:210px;width:2px;height:1270px;background:#c8c8c8'></div>
<div class='cell' style='left:-87px;top:312px;width:320px;font-size:22.5px;line-height:32px;transform:scaleX(0.97)'>Jan</div>
<div class='cell' style='left:46px;top:310px;width:320px;font-size:29.5px;line-height:32px;transform:scaleX(0.96)'>30</div>
<div class='cell' style='left:256px;top:310px;width:320px;font-size:29.5px;line-height:32px;transform:scaleX(0.937)'>Dr. Hemadi Fahad</div>
<div class='cell' style='left:513px;top:310px;width:320px;font-size:29.5px;line-height:32px;transform:scaleX(0.99)'>Outpatient</div>
<div class='cell' style='left:724px;top:310px;width:320px;font-size:29.5px;line-height:32px;transform:scaleX(0.927)'>Self Pay</div>
<div class='cell' style='left:961px;top:310px;width:320px;font-size:29.5px;line-height:32px;transform:scaleX(0.94)'>Nurse Proc</div>
<div class='cell' style='left:1240px;top:310px;width:320px;font-size:29.5px;line-height:32px;transform:scaleX(0.965)'>10145747</div>
<div class='cell' style='left:1553px;top:310px;width:320px;font-size:29.5px;line-height:32px;transform:scaleX(0.96)'>Patient Other</div>
<div class='cell' style='left:1838px;top:310px;width:320px;font-size:29.5px;line-height:32px;transform:scaleX(0.88)'>Canceled</div>
<div class='cell' style='left:-87px;top:366px;width:320px;font-size:22.5px;line-height:32px;transform:scaleX(0.97)'>Jan</div>
<div class='cell' style='left:46px;top:364px;width:320px;font-size:29.5px;line-height:32px;transform:scaleX(0.96)'>27</div>
<div class='cell' style='left:256px;top:364px;width:320px;font-size:29.5px;line-height:32px;transform:scaleX(0.937)'>Dr. Georges Sioufiu</div>
<div class='cell' style='left:513px;top:364px;width:320px;font-size:29.5px;line-height:32px;transform:scaleX(0.99)'>Inpatient</div>
<div class='cell' style='left:724px;top:364px;width:320px;font-size:29.5px;line-height:32px;transform:scaleX(0.927)'>Credit Card</div>
<div class='cell' style='left:961px;top:364px;width:320px;font-size:29.5px;line-height:32px;transform:scaleX(0.94)'>Fetal Medicine</div>
<div class='cell' style='left:1240px;top:364px;width:320px;font-size:29.5px;line-height:32px;transform:scaleX(0.965)'>10153236</div>
<div class='cell' style='left:1553px;top:364px;width:320px;font-size:29.5px;line-height:32px;transform:scaleX(0.96)'>Patient Other</div>
<div class='cell' style='left:1838px;top:364px;width:320px;font-size:29.5px;line-height:32px;transform:scaleX(0.88)'>Canceled</div>
<div class='cell' style='left:-87px;top:420px;width:320px;font-size:22.5px;line-height:32px;transform:scaleX(0.97)'>Feb</div>
<div class='cell' style='left:46px;top:418px;width:320px;font-size:29.5px;line-height:32px;transform:scaleX(0.96)'>17</div>
<div class='cell' style='left:256px;top:418px;width:320px;font-size:29.5px;line-height:32px;transform:scaleX(0.937)'>Dr. Ebrahim Hemadie</div>
<div class='cell' style='left:513px;top:418px;width:320px;font-size:29.5px;line-height:32px;transform:scaleX(0.99)'>Inpatient</div>
<div class='cell' style='left:724px;top:418px;width:320px;font-size:29.5px;line-height:32px;transform:scaleX(0.927)'>Credit Card</div>
<div class='cell' style='left:961px;top:418px;width:320px;font-size:29.5px;line-height:32px;transform:scaleX(0.94)'>Fetal Medicine</div>
<div class='cell' style='left:1240px;top:418px;width:320px;font-size:29.5px;line-height:32px;transform:scaleX(0.965)'>10125714</div>
<div class='cell' style='left:1553px;top:418px;width:320px;font-size:29.5px;line-height:32px;transform:scaleX(0.96)'>Patient Other</div>
<div class='cell' style='left:1838px;top:418px;width:320px;font-size:29.5px;line-height:32px;transform:scaleX(0.88)'>Canceled</div>
<div class='cell' style='left:-87px;top:474px;width:320px;font-size:22.5px;line-height:32px;transform:scaleX(0.97)'>Feb</div>
<div class='cell' style='left:46px;top:472px;width:320px;font-size:29.5px;line-height:32px;transform:scaleX(0.96)'>23</div>
<div class='cell' style='left:256px;top:472px;width:320px;font-size:29.5px;line-height:32px;transform:scaleX(0.937)'>Dr. Ebrahim Hemadie</div>
<div class='cell' style='left:513px;top:472px;width:320px;font-size:29.5px;line-height:32px;transform:scaleX(0.99)'>Outpatient</div>
<div class='cell' style='left:724px;top:472px;width:320px;font-size:29.5px;line-height:32px;transform:scaleX(0.927)'>Neuron</div>
<div class='cell' style='left:961px;top:472px;width:320px;font-size:29.5px;line-height:32px;transform:scaleX(0.94)'>Fetal Medicine</div>
<div class='cell' style='left:1240px;top:472px;width:320px;font-size:29.5px;line-height:32px;transform:scaleX(0.965)'>10139125</div>
<div class='cell' style='left:1553px;top:472px;width:320px;font-size:29.5px;line-height:32px;transform:scaleX(0.93)'>Schedule Change</div>
<div class='cell' style='left:1838px;top:472px;width:320px;font-size:29.5px;line-height:32px;transform:scaleX(0.88)'>Canceled</div>
<div class='cell' style='left:-87px;top:528px;width:320px;font-size:22.5px;line-height:32px;transform:scaleX(0.97)'>Feb</div>
<div class='cell' style='left:46px;top:526px;width:320px;font-size:29.5px;line-height:32px;transform:scaleX(0.96)'>5</div>
<div class='cell' style='left:256px;top:526px;width:320px;font-size:29.5px;line-height:32px;transform:scaleX(0.937)'>Dr. Georges Sioufiu</div>
<div class='cell' style='left:513px;top:526px;width:320px;font-size:29.5px;line-height:32px;transform:scaleX(0.99)'>Outpatient</div>
<div class='cell' style='left:724px;top:526px;width:320px;font-size:29.5px;line-height:32px;transform:scaleX(0.927)'>Self Pay</div>
<div class='cell' style='left:961px;top:526px;width:320px;font-size:29.5px;line-height:32px;transform:scaleX(0.94)'>Fetal Medicine</div>
<div class='cell' style='left:1240px;top:526px;width:320px;font-size:29.5px;line-height:32px;transform:scaleX(0.965)'>10128798</div>
<div class='cell' style='left:1553px;top:526px;width:320px;font-size:29.5px;line-height:32px;transform:scaleX(0.96)'>Patient Other</div>
<div class='cell' style='left:1838px;top:526px;width:320px;font-size:29.5px;line-height:32px;transform:scaleX(0.88)'>Canceled</div>
<div class='cell' style='left:-87px;top:582px;width:320px;font-size:22.5px;line-height:32px;transform:scaleX(0.97)'>Feb</div>
<div class='cell' style='left:46px;top:580px;width:320px;font-size:29.5px;line-height:32px;transform:scaleX(0.96)'>8</div>
<div class='cell' style='left:256px;top:580px;width:320px;font-size:29.5px;line-height:32px;transform:scaleX(0.937)'>Dr. Georges Sioufiu</div>
<div class='cell' style='left:513px;top:580px;width:320px;font-size:29.5px;line-height:32px;transform:scaleX(0.99)'>Outpatient</div>
<div class='cell' style='left:724px;top:580px;width:320px;font-size:29.5px;line-height:32px;transform:scaleX(0.927)'>Insurance</div>
<div class='cell' style='left:961px;top:580px;width:320px;font-size:29.5px;line-height:32px;transform:scaleX(0.94)'>Fetal Medicine</div>
<div class='cell' style='left:1240px;top:580px;width:320px;font-size:29.5px;line-height:32px;transform:scaleX(0.965)'>10150424</div>
<div class='cell' style='left:1553px;top:580px;width:320px;font-size:29.5px;line-height:32px;transform:scaleX(0.95)'>Meeting</div>
<div class='cell' style='left:1838px;top:580px;width:320px;font-size:29.5px;line-height:32px;transform:scaleX(0.88)'>Canceled</div>
<div class='cell' style='left:-87px;top:636px;width:320px;font-size:22.5px;line-height:32px;transform:scaleX(0.97)'>Feb</div>
<div class='cell' style='left:46px;top:634px;width:320px;font-size:29.5px;line-height:32px;transform:scaleX(0.96)'>13</div>
<div class='cell' style='left:256px;top:634px;width:320px;font-size:29.5px;line-height:32px;transform:scaleX(0.937)'>Dr. Ebrahim Hemadie</div>
<div class='cell' style='left:513px;top:634px;width:320px;font-size:29.5px;line-height:32px;transform:scaleX(0.99)'>Inpatient</div>
<div class='cell' style='left:724px;top:634px;width:320px;font-size:29.5px;line-height:32px;transform:scaleX(0.927)'>Insurance</div>
<div class='cell' style='left:961px;top:634px;width:320px;font-size:29.5px;line-height:32px;transform:scaleX(0.94)'>Fetal Medicine</div>
<div class='cell' style='left:1240px;top:634px;width:320px;font-size:29.5px;line-height:32px;transform:scaleX(0.965)'>10152186</div>
<div class='cell' style='left:1553px;top:634px;width:320px;font-size:29.5px;line-height:32px;transform:scaleX(0.93)'>Schedule Change</div>
<div class='cell' style='left:1838px;top:634px;width:320px;font-size:29.5px;line-height:32px;transform:scaleX(0.88)'>Canceled</div>
<div class='cell' style='left:-87px;top:690px;width:320px;font-size:22.5px;line-height:32px;transform:scaleX(0.97)'>Feb</div>
<div class='cell' style='left:46px;top:688px;width:320px;font-size:29.5px;line-height:32px;transform:scaleX(0.96)'>14</div>
<div class='cell' style='left:256px;top:688px;width:320px;font-size:29.5px;line-height:32px;transform:scaleX(0.937)'>Dr. Ebrahim Hemadie</div>
<div class='cell' style='left:513px;top:688px;width:320px;font-size:29.5px;line-height:32px;transform:scaleX(0.99)'>Inpatient</div>
<div class='cell' style='left:724px;top:688px;width:320px;font-size:29.5px;line-height:32px;transform:scaleX(0.927)'>AXA</div>
<div class='cell' style='left:961px;top:688px;width:320px;font-size:29.5px;line-height:32px;transform:scaleX(0.94)'>Fetal Medicine</div>
<div class='cell' style='left:1240px;top:688px;width:320px;font-size:29.5px;line-height:32px;transform:scaleX(0.965)'>10125173</div>
<div class='cell' style='left:1553px;top:688px;width:320px;font-size:29.5px;line-height:32px;transform:scaleX(0.96)'>Patient Other</div>
<div class='cell' style='left:1838px;top:688px;width:320px;font-size:29.5px;line-height:32px;transform:scaleX(0.88)'>Canceled</div>
<div class='cell' style='left:-87px;top:744px;width:320px;font-size:22.5px;line-height:32px;transform:scaleX(0.97)'>Feb</div>
<div class='cell' style='left:46px;top:742px;width:320px;font-size:29.5px;line-height:32px;transform:scaleX(0.96)'>6</div>
<div class='cell' style='left:256px;top:742px;width:320px;font-size:29.5px;line-height:32px;transform:scaleX(0.937)'>Dr. Georges Sioufiu</div>
<div class='cell' style='left:513px;top:742px;width:320px;font-size:29.5px;line-height:32px;transform:scaleX(0.99)'>Inpatient</div>
<div class='cell' style='left:724px;top:742px;width:320px;font-size:29.5px;line-height:32px;transform:scaleX(0.927)'>Insurance</div>
<div class='cell' style='left:961px;top:742px;width:320px;font-size:29.5px;line-height:32px;transform:scaleX(0.94)'>Fetal Medicine</div>
<div class='cell' style='left:1240px;top:742px;width:320px;font-size:29.5px;line-height:32px;transform:scaleX(0.965)'>10144108</div>
<div class='cell' style='left:1553px;top:742px;width:320px;font-size:29.5px;line-height:32px;transform:scaleX(0.93)'>Feeling Better</div>
<div class='cell' style='left:1838px;top:742px;width:320px;font-size:29.5px;line-height:32px;transform:scaleX(0.88)'>Canceled</div>
<div class='cell' style='left:-87px;top:798px;width:320px;font-size:22.5px;line-height:32px;transform:scaleX(0.97)'>Feb</div>
<div class='cell' style='left:46px;top:796px;width:320px;font-size:29.5px;line-height:32px;transform:scaleX(0.96)'>22</div>
<div class='cell' style='left:256px;top:796px;width:320px;font-size:29.5px;line-height:32px;transform:scaleX(0.937)'>Dr. Bachir Nimr</div>
<div class='cell' style='left:513px;top:796px;width:320px;font-size:29.5px;line-height:32px;transform:scaleX(0.99)'>Outpatient</div>
<div class='cell' style='left:724px;top:796px;width:320px;font-size:29.5px;line-height:32px;transform:scaleX(0.927)'>Neuron</div>
<div class='cell' style='left:961px;top:796px;width:320px;font-size:29.5px;line-height:32px;transform:scaleX(0.94)'>Fetal Medicine</div>
<div class='cell' style='left:1240px;top:796px;width:320px;font-size:29.5px;line-height:32px;transform:scaleX(0.965)'>10112136</div>
<div class='cell' style='left:1553px;top:796px;width:320px;font-size:29.5px;line-height:32px;transform:scaleX(0.95)'>No Show</div>
<div class='cell' style='left:1838px;top:796px;width:320px;font-size:29.5px;line-height:32px;transform:scaleX(0.88)'>Canceled</div>
<div class='cell' style='left:-87px;top:852px;width:320px;font-size:22.5px;line-height:32px;transform:scaleX(0.97)'>Feb</div>
<div class='cell' style='left:46px;top:850px;width:320px;font-size:29.5px;line-height:32px;transform:scaleX(0.96)'>22</div>
<div class='cell' style='left:256px;top:850px;width:320px;font-size:29.5px;line-height:32px;transform:scaleX(0.937)'>Dr. Bachir Nimr</div>
<div class='cell' style='left:513px;top:850px;width:320px;font-size:29.5px;line-height:32px;transform:scaleX(0.99)'>Outpatient</div>
<div class='cell' style='left:724px;top:850px;width:320px;font-size:29.5px;line-height:32px;transform:scaleX(0.927)'>Neuron</div>
<div class='cell' style='left:961px;top:850px;width:320px;font-size:29.5px;line-height:32px;transform:scaleX(0.94)'>Fetal Medicine</div>
<div class='cell' style='left:1240px;top:850px;width:320px;font-size:29.5px;line-height:32px;transform:scaleX(0.965)'>10112136</div>
<div class='cell' style='left:1553px;top:850px;width:320px;font-size:29.5px;line-height:32px;transform:scaleX(0.95)'>No Show</div>
<div class='cell' style='left:1838px;top:850px;width:320px;font-size:29.5px;line-height:32px;transform:scaleX(0.88)'>Canceled</div>
<div class='cell' style='left:-87px;top:906px;width:320px;font-size:22.5px;line-height:32px;transform:scaleX(0.97)'>Feb</div>
<div class='cell' style='left:46px;top:904px;width:320px;font-size:29.5px;line-height:32px;transform:scaleX(0.96)'>22</div>
<div class='cell' style='left:256px;top:904px;width:320px;font-size:29.5px;line-height:32px;transform:scaleX(0.937)'>Dr. Bachir Nimr</div>
<div class='cell' style='left:513px;top:904px;width:320px;font-size:29.5px;line-height:32px;transform:scaleX(0.99)'>Outpatient</div>
<div class='cell' style='left:724px;top:904px;width:320px;font-size:29.5px;line-height:32px;transform:scaleX(0.927)'>Neuron</div>
<div class='cell' style='left:961px;top:904px;width:320px;font-size:29.5px;line-height:32px;transform:scaleX(0.94)'>Fetal Medicine</div>
<div class='cell' style='left:1240px;top:904px;width:320px;font-size:29.5px;line-height:32px;transform:scaleX(0.965)'>10105084</div>
<div class='cell' style='left:1553px;top:904px;width:320px;font-size:29.5px;line-height:32px;transform:scaleX(0.95)'>No Show</div>
<div class='cell' style='left:1838px;top:904px;width:320px;font-size:29.5px;line-height:32px;transform:scaleX(0.88)'>Canceled</div>
<div class='cell' style='left:-87px;top:960px;width:320px;font-size:22.5px;line-height:32px;transform:scaleX(0.97)'>Feb</div>
<div class='cell' style='left:46px;top:958px;width:320px;font-size:29.5px;line-height:32px;transform:scaleX(0.96)'>22</div>
<div class='cell' style='left:256px;top:958px;width:320px;font-size:29.5px;line-height:32px;transform:scaleX(0.937)'>Dr. Bachir Nimr</div>
<div class='cell' style='left:513px;top:958px;width:320px;font-size:29.5px;line-height:32px;transform:scaleX(0.99)'>Outpatient</div>
<div class='cell' style='left:724px;top:958px;width:320px;font-size:29.5px;line-height:32px;transform:scaleX(0.927)'>Neuron</div>
<div class='cell' style='left:961px;top:958px;width:320px;font-size:29.5px;line-height:32px;transform:scaleX(0.94)'>Fetal Medicine</div>
<div class='cell' style='left:1240px;top:958px;width:320px;font-size:29.5px;line-height:32px;transform:scaleX(0.965)'>10116601</div>
<div class='cell' style='left:1553px;top:958px;width:320px;font-size:29.5px;line-height:32px;transform:scaleX(0.95)'>No Show</div>
<div class='cell' style='left:1838px;top:958px;width:320px;font-size:29.5px;line-height:32px;transform:scaleX(0.88)'>Canceled</div>
<div class='cell' style='left:-87px;top:1014px;width:320px;font-size:22.5px;line-height:32px;transform:scaleX(0.97)'>Feb</div>
<div class='cell' style='left:46px;top:1012px;width:320px;font-size:29.5px;line-height:32px;transform:scaleX(0.96)'>29</div>
<div class='cell' style='left:256px;top:1012px;width:320px;font-size:29.5px;line-height:32px;transform:scaleX(0.937)'>Dr. Georges Sioufiu</div>
<div class='cell' style='left:513px;top:1012px;width:320px;font-size:29.5px;line-height:32px;transform:scaleX(0.99)'>Outpatient</div>
<div class='cell' style='left:724px;top:1012px;width:320px;font-size:29.5px;line-height:32px;transform:scaleX(0.927)'>Neuron</div>
<div class='cell' style='left:961px;top:1012px;width:320px;font-size:29.5px;line-height:32px;transform:scaleX(0.94)'>Fetal Medicine</div>
<div class='cell' style='left:1240px;top:1012px;width:320px;font-size:29.5px;line-height:32px;transform:scaleX(0.965)'>10143198</div>
<div class='cell' style='left:1553px;top:1012px;width:320px;font-size:29.5px;line-height:32px;transform:scaleX(0.93)'>Schedule Change</div>
<div class='cell' style='left:1838px;top:1012px;width:320px;font-size:29.5px;line-height:32px;transform:scaleX(0.88)'>Canceled</div>
<div class='cell' style='left:-87px;top:1068px;width:320px;font-size:22.5px;line-height:32px;transform:scaleX(0.97)'>Feb</div>
<div class='cell' style='left:46px;top:1066px;width:320px;font-size:29.5px;line-height:32px;transform:scaleX(0.96)'>23</div>
<div class='cell' style='left:256px;top:1066px;width:320px;font-size:29.5px;line-height:32px;transform:scaleX(0.937)'>Dr. Ebrahim Hemadie</div>
<div class='cell' style='left:513px;top:1066px;width:320px;font-size:29.5px;line-height:32px;transform:scaleX(0.99)'>Outpatient</div>
<div class='cell' style='left:724px;top:1066px;width:320px;font-size:29.5px;line-height:32px;transform:scaleX(0.927)'>Neuron</div>
<div class='cell' style='left:961px;top:1066px;width:320px;font-size:29.5px;line-height:32px;transform:scaleX(0.94)'>Fetal Medicine</div>
<div class='cell' style='left:1240px;top:1066px;width:320px;font-size:29.5px;line-height:32px;transform:scaleX(0.965)'>10075237</div>
<div class='cell' style='left:1553px;top:1066px;width:320px;font-size:29.5px;line-height:32px;transform:scaleX(0.93)'>Schedule Change</div>
<div class='cell' style='left:1838px;top:1066px;width:320px;font-size:29.5px;line-height:32px;transform:scaleX(0.88)'>Canceled</div>
<div class='cell' style='left:-87px;top:1122px;width:320px;font-size:22.5px;line-height:32px;transform:scaleX(0.97)'>Feb</div>
<div class='cell' style='left:46px;top:1120px;width:320px;font-size:29.5px;line-height:32px;transform:scaleX(0.96)'>17</div>
<div class='cell' style='left:256px;top:1120px;width:320px;font-size:29.5px;line-height:32px;transform:scaleX(0.937)'>Dr. Ebrahim Hemadie</div>
<div class='cell' style='left:513px;top:1120px;width:320px;font-size:29.5px;line-height:32px;transform:scaleX(0.99)'>Inpatient</div>
<div class='cell' style='left:724px;top:1120px;width:320px;font-size:29.5px;line-height:32px;transform:scaleX(0.927)'>Neuron</div>
<div class='cell' style='left:961px;top:1120px;width:320px;font-size:29.5px;line-height:32px;transform:scaleX(0.94)'>Fetal Medicine</div>
<div class='cell' style='left:1240px;top:1120px;width:320px;font-size:29.5px;line-height:32px;transform:scaleX(0.965)'>10078360</div>
<div class='cell' style='left:1553px;top:1120px;width:320px;font-size:29.5px;line-height:32px;transform:scaleX(0.96)'>Patient Other</div>
<div class='cell' style='left:1838px;top:1120px;width:320px;font-size:29.5px;line-height:32px;transform:scaleX(0.88)'>Canceled</div>
<div class='cell' style='left:-87px;top:1176px;width:320px;font-size:22.5px;line-height:32px;transform:scaleX(0.97)'>Feb</div>
<div class='cell' style='left:46px;top:1174px;width:320px;font-size:29.5px;line-height:32px;transform:scaleX(0.96)'>28</div>
<div class='cell' style='left:256px;top:1174px;width:320px;font-size:29.5px;line-height:32px;transform:scaleX(0.937)'>Dr. Muhammad Usman</div>
<div class='cell' style='left:513px;top:1174px;width:320px;font-size:29.5px;line-height:32px;transform:scaleX(0.99)'>Inpatient</div>
<div class='cell' style='left:724px;top:1174px;width:320px;font-size:29.5px;line-height:32px;transform:scaleX(0.927)'>Nextcare</div>
<div class='cell' style='left:961px;top:1174px;width:320px;font-size:29.5px;line-height:32px;transform:scaleX(0.94)'>Fetal Medicine</div>
<div class='cell' style='left:1240px;top:1174px;width:320px;font-size:29.5px;line-height:32px;transform:scaleX(0.965)'>10145338</div>
<div class='cell' style='left:1553px;top:1174px;width:320px;font-size:29.5px;line-height:32px;transform:scaleX(0.93)'>Scheduled in Error</div>
<div class='cell' style='left:1838px;top:1174px;width:320px;font-size:29.5px;line-height:32px;transform:scaleX(0.88)'>Canceled</div>
<div class='cell' style='left:-87px;top:1230px;width:320px;font-size:22.5px;line-height:32px;transform:scaleX(0.97)'>Feb</div>
<div class='cell' style='left:46px;top:1228px;width:320px;font-size:29.5px;line-height:32px;transform:scaleX(0.96)'>16</div>
<div class='cell' style='left:256px;top:1228px;width:320px;font-size:29.5px;line-height:32px;transform:scaleX(0.937)'>Dr. Georges Sioufiu</div>
<div class='cell' style='left:513px;top:1228px;width:320px;font-size:29.5px;line-height:32px;transform:scaleX(0.99)'>Inpatient</div>
<div class='cell' style='left:724px;top:1228px;width:320px;font-size:29.5px;line-height:32px;transform:scaleX(0.927)'>Nextcare</div>
<div class='cell' style='left:961px;top:1228px;width:320px;font-size:29.5px;line-height:32px;transform:scaleX(0.94)'>Fetal Medicine</div>
<div class='cell' style='left:1240px;top:1228px;width:320px;font-size:29.5px;line-height:32px;transform:scaleX(0.965)'>10141174</div>
<div class='cell' style='left:1553px;top:1228px;width:320px;font-size:29.5px;line-height:32px;transform:scaleX(0.96)'>Patient Other</div>
<div class='cell' style='left:1838px;top:1228px;width:320px;font-size:29.5px;line-height:32px;transform:scaleX(0.88)'>Canceled</div>
<div class='cell' style='left:-87px;top:1284px;width:320px;font-size:22.5px;line-height:32px;transform:scaleX(0.97)'>Feb</div>
<div class='cell' style='left:46px;top:1282px;width:320px;font-size:29.5px;line-height:32px;transform:scaleX(0.96)'>19</div>
<div class='cell' style='left:256px;top:1282px;width:320px;font-size:29.5px;line-height:32px;transform:scaleX(0.937)'>Dr. Bergmany</div>
<div class='cell' style='left:513px;top:1282px;width:320px;font-size:29.5px;line-height:32px;transform:scaleX(0.99)'>Inpatient</div>
<div class='cell' style='left:724px;top:1282px;width:320px;font-size:29.5px;line-height:32px;transform:scaleX(0.927)'>Credit Card</div>
<div class='cell' style='left:961px;top:1282px;width:320px;font-size:29.5px;line-height:32px;transform:scaleX(0.94)'>Fetal Medicine</div>
<div class='cell' style='left:1240px;top:1282px;width:320px;font-size:29.5px;line-height:32px;transform:scaleX(0.965)'>10129848</div>
<div class='cell' style='left:1553px;top:1282px;width:320px;font-size:29.5px;line-height:32px;transform:scaleX(0.96)'>Patient Other</div>
<div class='cell' style='left:1838px;top:1282px;width:320px;font-size:29.5px;line-height:32px;transform:scaleX(0.88)'>Canceled</div>
<div class='cell' style='left:-87px;top:1338px;width:320px;font-size:22.5px;line-height:32px;transform:scaleX(0.97)'>Feb</div>
<div class='cell' style='left:46px;top:1336px;width:320px;font-size:29.5px;line-height:32px;transform:scaleX(0.96)'>26</div>
<div class='cell' style='left:256px;top:1336px;width:320px;font-size:29.5px;line-height:32px;transform:scaleX(0.937)'>Dr. Georges Sioufiu</div>
<div class='cell' style='left:513px;top:1336px;width:320px;font-size:29.5px;line-height:32px;transform:scaleX(0.99)'>Inpatient</div>
<div class='cell' style='left:724px;top:1336px;width:320px;font-size:29.5px;line-height:32px;transform:scaleX(0.927)'>Credit Card</div>
<div class='cell' style='left:961px;top:1336px;width:320px;font-size:29.5px;line-height:32px;transform:scaleX(0.94)'>Fetal Medicine</div>
<div class='cell' style='left:1240px;top:1336px;width:320px;font-size:29.5px;line-height:32px;transform:scaleX(0.965)'>10119235</div>
<div class='cell' style='left:1553px;top:1336px;width:320px;font-size:29.5px;line-height:32px;transform:scaleX(0.93)'>Schedule Change</div>
<div class='cell' style='left:1838px;top:1336px;width:320px;font-size:29.5px;line-height:32px;transform:scaleX(0.88)'>Canceled</div>
<div class='cell' style='left:-87px;top:1392px;width:320px;font-size:22.5px;line-height:32px;transform:scaleX(0.97)'>Feb</div>
<div class='cell' style='left:46px;top:1390px;width:320px;font-size:29.5px;line-height:32px;transform:scaleX(0.96)'>27</div>
<div class='cell' style='left:256px;top:1390px;width:320px;font-size:29.5px;line-height:32px;transform:scaleX(0.937)'>Dr. Georges Sioufiu</div>
<div class='cell' style='left:513px;top:1390px;width:320px;font-size:29.5px;line-height:32px;transform:scaleX(0.99)'>Outpatient</div>
<div class='cell' style='left:724px;top:1390px;width:320px;font-size:29.5px;line-height:32px;transform:scaleX(0.927)'>Credit Card</div>
<div class='cell' style='left:961px;top:1390px;width:320px;font-size:29.5px;line-height:32px;transform:scaleX(0.94)'>Fetal Medicine</div>
<div class='cell' style='left:1240px;top:1390px;width:320px;font-size:29.5px;line-height:32px;transform:scaleX(0.965)'>10092228</div>
<div class='cell' style='left:1553px;top:1390px;width:320px;font-size:29.5px;line-height:32px;transform:scaleX(0.93)'>Schedule Change</div>
<div class='cell' style='left:1838px;top:1390px;width:320px;font-size:29.5px;line-height:32px;transform:scaleX(0.88)'>Canceled</div>
<div class='cell' style='left:-87px;top:1446px;width:320px;font-size:22.5px;line-height:32px;transform:scaleX(0.97)'>Feb</div>
<div class='cell' style='left:46px;top:1444px;width:320px;font-size:29.5px;line-height:32px;transform:scaleX(0.96)'>27</div>
<div class='cell' style='left:256px;top:1444px;width:320px;font-size:29.5px;line-height:32px;transform:scaleX(0.937)'>Dr. Georges Sioufiu</div>
<div class='cell' style='left:513px;top:1444px;width:320px;font-size:29.5px;line-height:32px;transform:scaleX(0.99)'>Inpatient</div>
<div class='cell' style='left:724px;top:1444px;width:320px;font-size:29.5px;line-height:32px;transform:scaleX(0.927)'>Credit Card</div>
<div class='cell' style='left:961px;top:1444px;width:320px;font-size:29.5px;line-height:32px;transform:scaleX(0.94)'>Fetal Medicine</div>
<div class='cell' style='left:1240px;top:1444px;width:320px;font-size:29.5px;line-height:32px;transform:scaleX(0.965)'>10125312</div>
<div class='cell' style='left:1553px;top:1444px;width:320px;font-size:29.5px;line-height:32px;transform:scaleX(0.96)'>Patient Other</div>
<div class='cell' style='left:1838px;top:1444px;width:320px;font-size:29.5px;line-height:32px;transform:scaleX(0.88)'>Canceled</div>
<div class='wm' style='left:124.5px;top:426px;width:660px;height:66px;text-align:center;transform:rotate(-36.5deg)'>www.other-levels.com</div>
<div class='wm' style='left:1885px;top:500px;width:660px;height:66px;text-align:center;transform:rotate(-36.5deg)'>www.other-levels.com</div>
<div class='wm' style='left:333px;top:911px;width:660px;height:66px;text-align:center;transform:rotate(-36.5deg)'>www.other-levels.com</div>
<div class='wm' style='left:732px;top:1179px;width:660px;height:66px;text-align:center;transform:rotate(-36.5deg)'>www.other-levels.com</div>
<div class='wm' style='left:2070px;top:1181.5px;width:660px;height:66px;text-align:center;transform:rotate(-36.5deg)'>www.other-levels.com</div>
<div class='wm' style='left:968px;top:1555px;width:660px;height:66px;text-align:center;transform:rotate(-36.5deg)'>www.other-levels.com</div>
<div class='wm' style='left:2032px;top:1599px;width:660px;height:66px;text-align:center;transform:rotate(-36.5deg)'>www.other-levels.com</div>
<div class='a' style='left:1445px;top:703px;font-size:145.3px;color:#00bef2;line-height:164px;white-space:nowrap;transform:scaleX(0.994);transform-origin:0 0'>Datasets are clear<br>and easy to update</div></body></html>
